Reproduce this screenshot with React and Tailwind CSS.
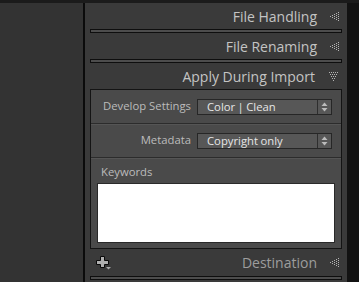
const DotLeft = () => (
  <svg width="9" height="11" viewBox="0 0 9 11" className="shrink-0">
    {[
      [0, 5], [2, 4], [2, 6], [4, 3], [4, 5], [4, 7], [6, 2], [6, 4], [6, 6], [6, 8],
      [8, 1], [8, 3], [8, 5], [8, 7], [8, 9],
    ].map(([x, y]) => (
      <rect key={`${x}-${y}`} x={x} y={y} width="1" height="1" fill="#b5b5b5" />
    ))}
  </svg>
);

const DotDown = () => (
  <svg width="11" height="9" viewBox="0 0 11 9" className="shrink-0">
    {[
      [1, 0], [3, 0], [5, 0], [7, 0], [9, 0], [2, 2], [4, 2], [6, 2], [8, 2],
      [3, 4], [5, 4], [7, 4], [4, 6], [6, 6], [5, 8],
    ].map(([x, y]) => (
      <rect key={`${x}-${y}`} x={x} y={y} width="1" height="1" fill="#b5b5b5" />
    ))}
  </svg>
);

const Bar = () => (
  <div className="mx-[5px] h-[4px] border border-[#0e0e0e] bg-[#4d4d4d]" />
);

const Header = ({ title, open }) => (
  <div className="h-[26px] flex justify-end items-center gap-[13px] pr-[8px]">
    <span className="text-[14px] text-[#c4c4c4]">{title}</span>
    {open ? <DotDown /> : <DotLeft />}
  </div>
);

const Select = ({ value }) => (
  <div className="w-[135px] h-[16px] flex border border-[#262626] bg-[#575757]">
    <span className="flex-1 pl-[9px] text-[11.3px] leading-[14px] text-[#e6e6e6] [word-spacing:-0.5px]">{value}</span>
    <div className="w-[14px] border-l border-[#2e2e2e] flex items-center justify-center">
      <svg width="7" height="10" viewBox="0 0 7 10">
        <path d="M3.5 0.5 L6.5 4 H0.5 Z" fill="#bbbbbb" />
        <path d="M3.5 9.5 L6.5 6 H0.5 Z" fill="#bbbbbb" />
      </svg>
    </div>
  </div>
);

const Row = ({ label, value }) => (
  <div className="h-[34px] flex items-center border-b border-[#2c2c2c] shadow-[0_1px_0_#555]">
    <span className="w-[100px] text-right text-[11.3px] text-[#bcbcbc]">{label}</span>
    <div className="ml-[6px]">
      <Select value={value} />
    </div>
  </div>
);

const PlusIcon = () => (
  <svg width="15" height="14" viewBox="0 0 15 14" className="shrink-0">
    <path
      d="M4.5 0.5 H8.5 V4.5 H12.5 V8.5 H8.5 V11.5 H4.5 V8.5 H0.5 V4.5 H4.5 Z"
      fill="#b0b0b0"
      stroke="#0a0a0a"
      strokeWidth="1"
    />
    <path d="M10 11 H15 L12.5 13.5 Z" fill="#a8a8a8" />
  </svg>
);

export default function App() {
  return (
    <div
      className="w-[359px] h-[282px] flex flex-col bg-[#1b1b1b] overflow-hidden"
      style={{ fontFamily: '"Open Sans", "Liberation Sans", sans-serif' }}
    >
      <div className="h-[3px] bg-[#1b1b1b]" />
      <div className="flex-1 flex">
        <div className="w-[83px] bg-[#333333]" />
        <div className="w-[2px] bg-[#0b0b0b]" />
        <div className="w-[262px] bg-[#3a3a3a] flex flex-col">
          <Header title="File Handling" />
          <Bar />
          <Header title="File Renaming" />
          <Bar />
          <Header title="Apply During Import" open />

          <div className="mx-[5px] h-[160px] border border-[#141414] bg-[#4a4a4a] flex flex-col">
            <Row label="Develop Settings" value="Color | Clean" />
            <Row label="Metadata" value="Copyright only" />
            <div className="flex-1 flex flex-col px-[6px]">
              <span className="pl-[4px] pt-[6px] h-[25px] text-[11.3px] text-[#bcbcbc]">Keywords</span>
              <div className="h-[60px] bg-white border border-[#2a2a2a]" />
            </div>
          </div>

          <div className="h-[27px] flex items-center pl-[11px] pr-[8px]">
            <PlusIcon />
            <span className="ml-auto text-[14px] text-[#9d9d9d]">Destination</span>
            <span className="ml-[13px]">
              <DotLeft />
            </span>
          </div>
          <Bar />
        </div>
        <div className="flex-1 bg-[#121212]" />
      </div>
    </div>
  );
}
